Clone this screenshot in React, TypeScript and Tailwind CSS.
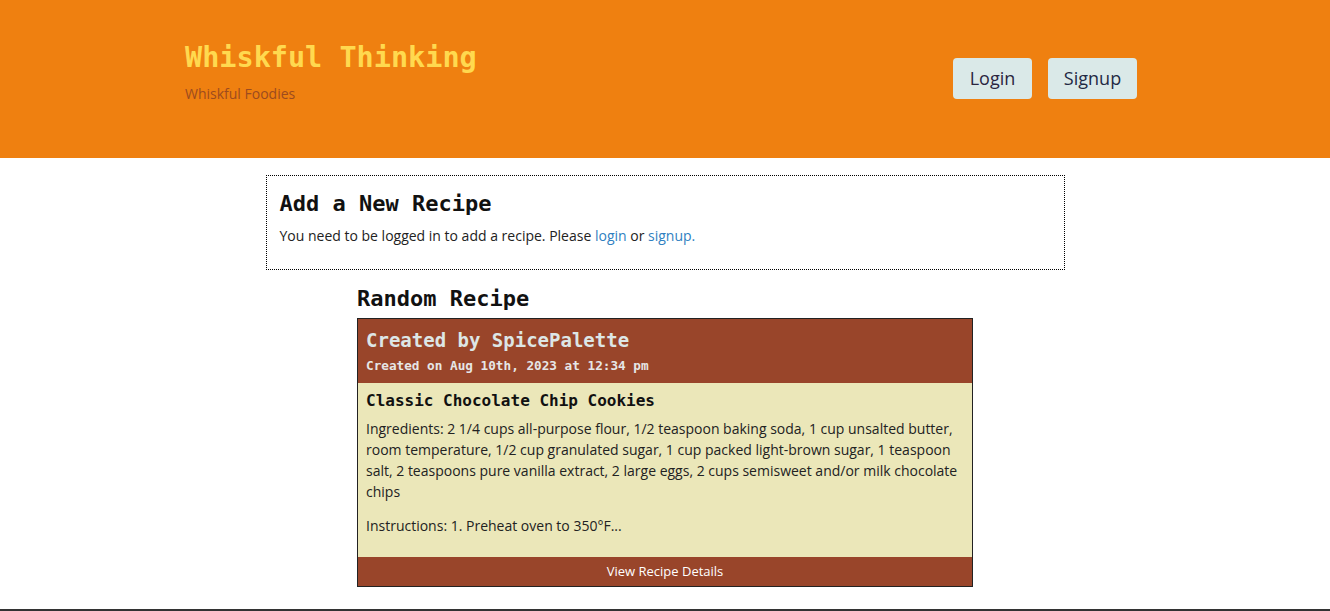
import React from 'react'

const mono = { fontFamily: '"DejaVu Sans Mono", "Liberation Mono", monospace' }

function Header() {
  return (
    <header className="bg-[#ef8010] h-[158px]">
      <div className="w-[960px] mx-auto pl-0 pr-2 flex justify-between items-start">
        <div className="pt-[40px]">
          <h1
            className="text-[28.5px] leading-[36px] font-bold text-[#ffd94f]"
            style={mono}
          >
            Whiskful Thinking
          </h1>
          <p className="mt-[8px] text-[14px] leading-[20px] text-[#9c4b1f]">
            Whiskful Foodies
          </p>
        </div>
        <nav className="flex gap-4 pt-[58px]">
          <button className="w-[79px] h-[41px] rounded bg-[#dae9e8] text-[18px] text-[#2a2540]">
            Login
          </button>
          <button className="w-[89px] h-[41px] rounded bg-[#dae9e8] text-[18px] text-[#1f2a44]">
            Signup
          </button>
        </nav>
      </div>
    </header>
  )
}

function AddRecipe() {
  return (
    <section className="w-[799px] mx-auto mt-[17px] border border-dotted border-black px-[13px] pt-[13px] pb-[23px]">
      <h2 className="text-[22px] leading-[30px] font-bold text-[#111]" style={mono}>
        Add a New Recipe
      </h2>
      <p className="mt-[7px] text-[14px] leading-[20px] text-[#222]">
        You need to be logged in to add a recipe. Please{' '}
        <a className="text-[#2f7fc1]">login</a> or{' '}
        <a className="text-[#2f7fc1]">signup.</a>
      </p>
    </section>
  )
}

function RandomRecipe() {
  return (
    <section className="w-[616px] mx-auto mt-[14px]">
      <h2 className="text-[22px] leading-[30px] font-bold text-[#111]" style={mono}>
        Random Recipe
      </h2>
      <div className="mt-[4px] border border-[#222]">
        <div className="bg-[#99452a] px-[8px] pt-[8px] pb-[7px]">
          <h3 className="text-[19px] leading-[26px] font-bold text-[#dde6e6]" style={mono}>
            Created by SpicePalette
          </h3>
          <p className="mt-[3px] text-[12.7px] leading-[20px] font-bold text-[#e6e6e6]" style={mono}>
            Created on Aug 10th, 2023 at 12:34 pm
          </p>
        </div>
        <div className="bg-[#ebe7b9] px-[8px] pt-[7px] pb-[21px] text-[#222]">
          <h4 className="text-[16px] leading-[22px] font-bold text-[#111]" style={mono}>
            Classic Chocolate Chip Cookies
          </h4>
          <p className="mt-[6px] text-[14px] leading-[21px]">
            Ingredients: 2 1/4 cups all-purpose flour, 1/2 teaspoon baking soda, 1 cup
            unsalted butter, room temperature, 1/2 cup granulated sugar, 1 cup packed
            light-brown sugar, 1 teaspoon salt, 2 teaspoons pure vanilla extract, 2 large
            eggs, 2 cups semisweet and/or milk chocolate chips
          </p>
          <p className="mt-[13px] text-[14px] leading-[21px]">
            Instructions: 1. Preheat oven to 350°F...
          </p>
        </div>
        <a className="block bg-[#99452a] h-[29px] leading-[29px] text-center text-[13px] text-white">
          View Recipe Details
        </a>
      </div>
    </section>
  )
}

export default function App() {
  return (
    <div
      className="min-h-[611px] bg-white flex flex-col"
      style={{ fontFamily: '"Open Sans", "Noto Sans", sans-serif' }}
    >
      <Header />
      <main className="flex-1">
        <AddRecipe />
        <RandomRecipe />
      </main>
      <footer className="border-t-2 border-[#333] h-[2px] mt-[20px]" />
    </div>
  )
}
